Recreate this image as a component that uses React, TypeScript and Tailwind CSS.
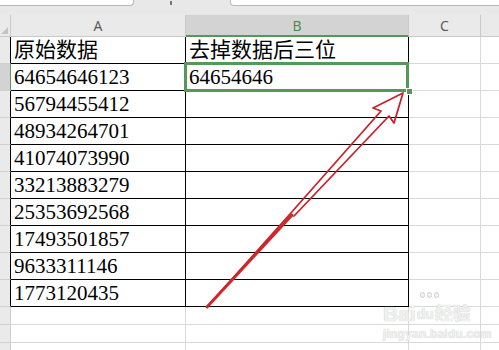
import React from 'react';

const rows = [
  ['原始数据', '去掉数据后三位'],
  ['64654646123', '64654646'],
  ['56794455412', ''],
  ['48934264701', ''],
  ['41074073990', ''],
  ['33213883279', ''],
  ['25353692568', ''],
  ['17493501857', ''],
  ['9633311146', ''],
  ['1773120435', ''],
];

const cell =
  "border-r border-b border-black pl-[3px] text-[21px] leading-[27px] text-black whitespace-nowrap font-['Liberation_Serif','DejaVu_Serif','Noto_Sans_CJK_SC',serif]";

export default function App() {
  return (
    <div className="relative w-[499px] h-[350px] overflow-hidden bg-white select-none">
      {/* formula bar strip */}
      <div className="flex h-[15px] bg-[#e8e8e8]">
        <div className="w-[134px] h-[6px] bg-white border-b border-r border-[#b9b9b9] rounded-br-[4px]" />
        <div className="w-[96px] flex justify-center">
          <div className="w-[2px] h-[4px] mt-[1px] bg-[#777] ml-[-22px]" />
        </div>
        <div className="flex-1 h-[6px] bg-white border-b border-l border-[#b9b9b9] rounded-bl-[4px]" />
      </div>

      {/* column headers */}
      <div className="flex h-[22px] bg-[#eaeaea] text-[14px] text-[#555] font-['Open_Sans','Liberation_Sans',sans-serif]">
        <div className="w-[11px] border-r border-b border-[#c9c9c9] relative">
          <div className="absolute right-[2px] bottom-[2px] w-0 h-0 border-l-[7px] border-l-transparent border-b-[7px] border-b-[#c4c4c4]" />
        </div>
        <div className="w-[175px] border-r border-b border-[#c9c9c9] flex items-center justify-center">A</div>
        <div className="w-[223px] bg-[#d3d3d3] border-r border-[#c9c9c9] border-b-2 border-b-[#55985a] flex items-center justify-center text-[#3f8a44]">B</div>
        <div className="w-[72px] border-r border-b border-[#c9c9c9] flex items-center justify-center">C</div>
        <div className="flex-1 border-b border-[#c9c9c9]" />
      </div>

      {/* data rows */}
      {rows.map((r, i) => (
        <div key={i} className="flex h-[27px]">
          <div
            className={
              'w-[11px] border-b border-b-[#cfcfcf] border-r ' +
              (i === 1 ? 'bg-[#d3d3d3] border-r-[#55985a]' : 'bg-[#eaeaea] border-r-black')
            }
          />
          <div className={'w-[175px] ' + cell}>{r[0]}</div>
          <div className={'w-[223px] ' + cell}>{r[1]}</div>
          <div className="w-[72px] border-r border-b border-[#d9d9d9]" />
          <div className="flex-1 border-b border-[#d9d9d9]" />
        </div>
      ))}

      {/* empty rows */}
      {[0, 1, 2].map((i) => (
        <div key={i} className="flex h-[18px]">
          <div className="w-[11px] bg-[#eaeaea] border-b border-r border-[#cfcfcf]" />
          <div className="w-[175px] border-r border-b border-[#d9d9d9]" />
          <div className="w-[223px] border-r border-b border-[#d9d9d9]" />
          <div className="w-[72px] border-r border-b border-[#d9d9d9]" />
          <div className="flex-1 border-b border-[#d9d9d9]" />
        </div>
      ))}

      {/* selection box on B2 */}
      <div className="absolute left-[184px] top-[62px] w-[225px] h-[30px] border-[3px] border-[#55985a] pointer-events-none" />
      <div className="absolute left-[406px] top-[88px] w-[7px] h-[7px] bg-[#55985a] border border-white" />

      {/* hand-drawn red arrow */}
      <svg className="absolute left-0 top-0 pointer-events-none" width="499" height="350" viewBox="0 0 499 350">
        <path
          d="M207 307 L290 214 L381 111 L373 108 L403 93 L394 123 L389 116 L294 216"
          fill="none"
          stroke="#c8232a"
          strokeWidth="1.8"
          strokeLinejoin="round"
          strokeLinecap="round"
        />
        <path d="M207 307 L292 215" fill="none" stroke="#d0262b" strokeWidth="3" strokeLinecap="round" />
      </svg>

      {/* watermark */}
      <div className="absolute left-[383px] top-[300px] flex flex-col items-start text-[#f0f0f0] pointer-events-none [text-shadow:0_0_1px_#bdbdbd] font-['Liberation_Sans','Noto_Sans_CJK_SC',sans-serif]">
        <div className="flex items-end text-[21px] font-bold leading-[24px]">
          <span>Bai</span>
          <span className="relative px-[1px]">
            <span className="absolute left-[4px] top-[-8px] flex gap-[2px]">
              <span className="w-[5px] h-[6px] rounded-full bg-[#f2f2f2] border border-[#d0d0d0]" />
              <span className="w-[5px] h-[6px] rounded-full bg-[#f2f2f2] border border-[#d0d0d0]" />
              <span className="w-[5px] h-[6px] rounded-full bg-[#f2f2f2] border border-[#d0d0d0]" />
            </span>
            <span className="text-[14px]">du</span>
          </span>
          <span className="text-[18px]">经验</span>
        </div>
        <div className="text-[12px] leading-[16px] font-bold tracking-[0.2px]">jingyan.baidu.com</div>
      </div>
    </div>
  );
}
